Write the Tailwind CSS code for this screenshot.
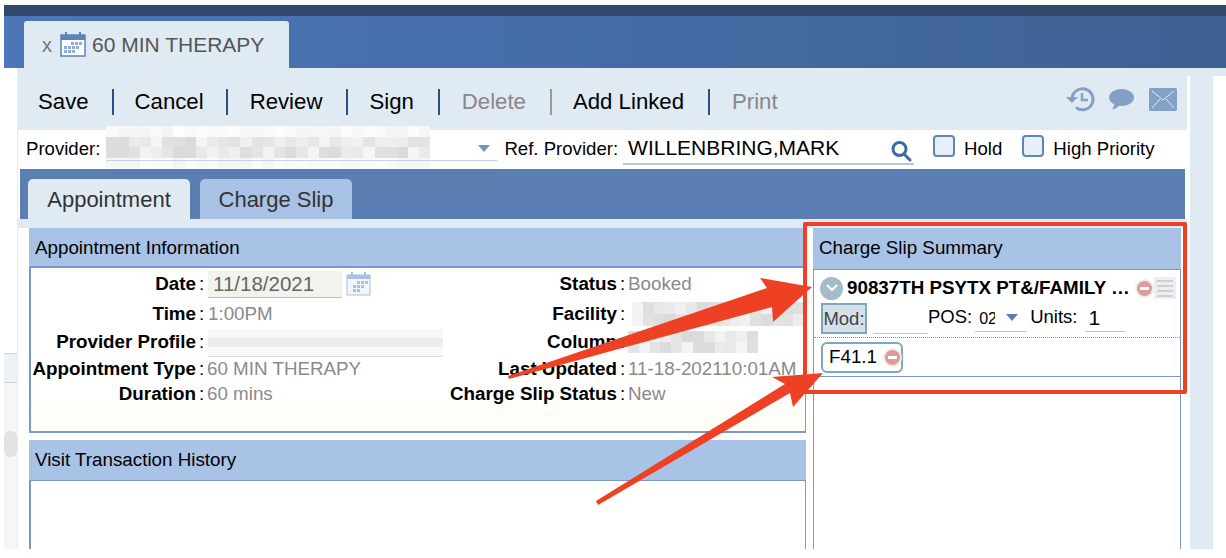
<!DOCTYPE html>
<html lang="en">
<head>
  <meta charset="UTF-8" />
  <title>60 MIN THERAPY</title>
  <script src="https://cdn.jsdelivr.net/npm/@tailwindcss/browser@4"></script>
</head>
<body class="bg-white font-['Liberation_Sans',Arial,sans-serif] text-black overflow-hidden">
<div class="relative w-[1226px] h-[549px] pt-[5px] overflow-hidden">

  <!-- top bar -->
  <div class="ml-[4px] h-[11px] bg-[#34496a]"></div>
  <div class="ml-[4px] h-[52px] pt-[5px] pl-[20px] bg-gradient-to-r from-[#4b76b8] to-[#3e6193]">
    <div class="w-[265px] h-[47px] bg-[#e0eaf2] rounded-t-[3px] flex items-center pl-[18px] text-[#555] text-[21px]">
      <span class="text-[#777] text-[20px] w-[18px]">x</span>
      <svg class="w-[26px] h-[26px] mr-[6px] -mt-[1px]" viewBox="0 0 26 26">
        <rect x="1" y="4" width="24" height="21" fill="#fff" stroke="#5b85b8" stroke-width="1.5"/>
        <rect x="1" y="4" width="24" height="5" fill="#5b85b8"/>
        <rect x="5" y="1" width="2" height="6" fill="#5b85b8"/><rect x="19" y="1" width="2" height="6" fill="#5b85b8"/>
        <g fill="#8fadd0"><rect x="11" y="11" width="3" height="3"/><rect x="15" y="11" width="3" height="3"/><rect x="19" y="11" width="3" height="3"/><rect x="4" y="15" width="3" height="3"/><rect x="8" y="15" width="3" height="3"/><rect x="12" y="15" width="3" height="3"/><rect x="16" y="15" width="3" height="3"/><rect x="4" y="19" width="3" height="3"/><rect x="8" y="19" width="3" height="3"/><rect x="12" y="19" width="3" height="3"/></g>
      </svg>
      <span>60 MIN THERAPY</span>
    </div>
  </div>

  <div class="flex">
    <!-- left edge scroller -->
    <div class="w-[18px] h-[481px] pl-[4px] flex flex-col border-r border-[#e4edf4]">
      <div class="h-[285px]"></div>
      <div class="h-[30px] bg-[#eef2f6] border-y border-[#cfd4d8]"></div>
      <div class="flex-1 bg-[#f6f6f6] pt-[48px]">
        <div class="h-[26px] rounded-[6px] bg-[#e2e2e2]"></div>
      </div>
    </div>

    <!-- main -->
    <div class="w-[1169px]">
      <!-- toolbar -->
      <div class="h-[62px] bg-[#e0eaf2] flex items-center pt-[6px] pl-[20px] pr-[10px] text-[22.200px]">
        <span class="pr-[23px]">Save</span>
        <span class="pl-[21px] pr-[22px] border-l-2 border-[#2a5080] leading-[26px]">Cancel</span>
        <span class="pl-[22px] pr-[24px] border-l-2 border-[#2a5080] leading-[26px]">Review</span>
        <span class="pl-[21px] pr-[24px] border-l-2 border-[#2a5080] leading-[26px]">Sign</span>
        <span class="pl-[22px] pr-[24px] border-l-2 border-[#2a5080] leading-[26px] text-[#888]">Delete</span>
        <span class="pl-[21px] pr-[24px] border-l-2 border-[#999] leading-[26px]">Add Linked</span>
        <span class="pl-[22px] border-l-2 border-[#2a5080] leading-[26px] text-[#888]">Print</span>
        <div class="ml-auto flex items-center -mt-[6px]">
          <svg class="w-[30px] h-[26px]" viewBox="0 0 30 26" fill="none" stroke="#84a0c6" stroke-width="3">
            <path d="M7 13a10.500 10.500 0 1 1 4 8.500"/>
            <path d="M1 11l6 6 6-6z" fill="#84a0c6" stroke="none"/>
            <path d="M17 7v7h6" stroke-width="2.500"/>
          </svg>
          <svg class="w-[27px] h-[23px] ml-[13px]" viewBox="0 0 27 23"><path d="M13.500 1C6.500 1 1 4.800 1 9.500c0 2.900 2 5.400 5.200 6.900-.3 2-1.300 3.800-2.600 5.100 3-.3 5.800-1.800 7.700-3.700.7.100 1.400.200 2.200.200 7 0 12.500-3.800 12.500-8.500S20.500 1 13.500 1z" fill="#84a0c6"/></svg>
          <svg class="w-[28px] h-[23px] ml-[14px]" viewBox="0 0 28 23"><rect width="28" height="23" rx="1.500" fill="#84a0c6"/><path d="M3 3l11 9 11-9M3 20l8-9M25 20l-8-9" fill="none" stroke="#e8eef5" stroke-width="1"/></svg>
        </div>
      </div>

      <!-- provider row -->
      <div class="relative h-[39px] flex items-center text-[18.600px] pl-[8px] pb-[2px]">
        <span>Provider:</span>
        <div class="relative w-[391px] h-[39px] ml-[6px] mr-[7px]">
          <div data-pixels="29,4" class="absolute left-0 -top-[3px] w-[324px] h-[42px]"></div>
          <div class="absolute left-0 right-0 bottom-[7px] h-px bg-[#c4d2e4]"></div>
          <div class="absolute left-[372px] top-[16px] border-x-[6px] border-x-transparent border-t-[7px] border-t-[#6f93c4]"></div>
        </div>
        <span>Ref. Provider:</span>
        <div class="relative w-[291px] h-[33px] ml-[5px] border-b-2 border-[#b6c7de] flex items-center pl-[5px] text-[21px]">
          WILLENBRING,MARK
          <svg class="absolute left-[267px] top-[8px] w-[22px] h-[22px]" viewBox="0 0 22 22" fill="none" stroke="#3f6a9f" stroke-width="3"><circle cx="9.500" cy="9" r="6.500"/><path d="M14 14l6 6" stroke-linecap="round"/></svg>
        </div>
        <span class="w-[22px] h-[22px] ml-[19px] -mt-[6px] rounded-[4px] border-2 border-[#5f86b5] bg-[#e6effa]"></span>
        <span class="ml-[9px]">Hold</span>
        <span class="w-[22px] h-[22px] ml-[20px] -mt-[6px] rounded-[4px] border-2 border-[#5f86b5] bg-[#e6effa]"></span>
        <span class="ml-[9px]">High Priority</span>
      </div>

      <!-- tabs band -->
      <div class="ml-[2px] mr-[2px] h-[50px] bg-[#5b7fb3] flex items-end pl-[8px] text-[22px]">
        <div class="w-[162px] h-[40px] rounded-t-[5px] bg-[#e0eaf2] text-[#333] flex items-center justify-center">Appointment</div>
        <div class="w-[152px] h-[40px] ml-[10px] rounded-t-[5px] bg-[#a8c2e5] text-[#333] flex items-center justify-center">Charge Slip</div>
      </div>
      <div class="h-[9px] bg-[#e0eaf2]"></div>

      <div class="flex pl-[11px] text-[18.800px]">
        <!-- left column -->
        <div class="w-[777px] flex flex-col">
          <div class="h-[38px] bg-[#a9c3e6] flex items-center pl-[6px] pt-[2px]">Appointment Information</div>
          <div class="h-[167px] border-2 border-[#7b98c6] border-r bg-gradient-to-b from-white from-[82%] to-[#fffdf8] to-[82%]">
            <div class="grid grid-cols-[165px_12px_240px_169px_11px_1fr] grid-rows-[33px_26px_30px_25px_24px] items-center whitespace-nowrap">
              <b class="text-right">Date</b><span class="pl-[3px]">:</span>
              <div class="relative">
                <div class="w-[134px] h-[27px] bg-[#f3f3ee] border-b border-[#bbb] pl-[5px] text-[#666] text-[20.500px] leading-[26px]">11/18/2021</div>
                <svg class="absolute left-[138px] top-0 w-[25px] h-[25px]" viewBox="0 0 25 25">
                  <rect x="1" y="4" width="23" height="20" fill="#f2f6fb" stroke="#a9c0de"/><rect x="1" y="4" width="23" height="4" fill="#a9c0de"/>
                  <rect x="5" y="1" width="2" height="5" fill="#a9c0de"/><rect x="18" y="1" width="2" height="5" fill="#a9c0de"/>
                  <g fill="#a9c0de"><rect x="11" y="10" width="3" height="3"/><rect x="15" y="10" width="3" height="3"/><rect x="19" y="10" width="3" height="3"/><rect x="7" y="14" width="3" height="3"/><rect x="11" y="14" width="3" height="3"/><rect x="15" y="14" width="3" height="3"/><rect x="7" y="18" width="3" height="3"/><rect x="11" y="18" width="3" height="3"/></g>
                </svg>
              </div>
              <b class="text-right">Status</b><span class="pl-[3px]">:</span><span class="text-[#8a8a8a]">Booked</span>

              <b class="text-right">Time</b><span class="pl-[3px]">:</span><span class="text-[#8a8a8a]">1:00PM</span>
              <b class="text-right">Facility</b><span class="pl-[3px]">:</span>
              <div data-pixels="16,2" class="w-[172px] h-[24px] ml-[4px]"></div>

              <b class="text-right">Provider Profile</b><span class="pl-[3px]">:</span>
              <div class="w-[235px] h-[28px] border-b border-[#ddd] mt-[2px]" data-pixels="24,3"></div>
              <b class="text-right">Column</b><span class="pl-[3px]">:</span>
              <div data-pixels="12,2" class="w-[130px] h-[22px]"></div>

              <b class="text-right">Appointment Type</b><span class="pl-[3px]">:</span><span class="text-[#8a8a8a] -ml-px">60 MIN THERAPY</span>
              <b class="text-right">Last Updated</b><span class="pl-[3px]">:</span><span class="text-[#8a8a8a]">11-18-202110:01AM</span>

              <b class="text-right">Duration</b><span class="pl-[3px]">:</span><span class="text-[#8a8a8a] -ml-px">60 mins</span>
              <b class="text-right">Charge Slip Status</b><span class="pl-[3px]">:</span><span class="text-[#8a8a8a]">New</span>
            </div>
          </div>
          <div class="h-[41px] mt-[7px] bg-[#a9c3e6] border-b border-[#7b98c6] flex items-center pl-[6px] pt-[1px]">Visit Transaction History</div>
          <div class="flex-1 border-l-2 border-r border-[#7b98c6]"></div>
        </div>

        <!-- right column -->
        <div class="w-[368px] ml-[7px] flex flex-col h-[321px]">
          <div class="h-[41px] bg-[#a9c3e6] flex items-center pl-[6px]">Charge Slip Summary</div>
          <div class="flex-1 border-x border-t border-[#7b98c6]">
            <div class="h-[107px] border-b border-[#7b98c6]">
              <div class="flex items-center h-[33px] pt-[3px] pl-[6px]">
                <span class="w-[23px] h-[23px] rounded-full bg-[#a3bccb] flex items-center justify-center">
                  <svg class="w-[12px] h-[8px]" viewBox="0 0 12 8" fill="none" stroke="#fff" stroke-width="2"><path d="M1 1l5 5 5-5"/></svg>
                </span>
                <b class="ml-[4px] w-[290px] whitespace-nowrap">90837TH PSYTX PT&amp;/FAMILY …</b>
                <span class="w-[15px] h-[15px] rounded-full bg-[#dc9c97] ring-2 ring-[#f0ecec] flex items-center justify-center"><span class="w-[9px] h-[3px] bg-white"></span></span>
                <span class="w-[22px] h-[22px] ml-[2px] bg-[#eeeeee] flex flex-col justify-center gap-[3px] px-[3px]">
                  <span class="h-[2px] bg-[#cfcfcf]"></span><span class="h-[2px] bg-[#cfcfcf]"></span><span class="h-[2px] bg-[#cfcfcf]"></span><span class="h-[2px] bg-[#cfcfcf]"></span>
                </span>
              </div>
              <div class="flex h-[35px] pl-[7px] items-start border-b border-dotted border-[#7b98c6] pb-[2px] text-[18.500px]">
                <span class="w-[46px] h-[31px] bg-[#d5e0e8] border-2 border-[#7da7c0] text-[#444] flex items-center justify-center">Mod:</span>
                <span class="w-[55px] h-[31px] ml-[6px] border-b border-[#b6c7de]"></span>
                <span>POS:</span>
                <div class="relative w-[51px] h-[29px] ml-[3px] border-b border-[#b6c7de]">
                  <span class="absolute left-[4px] top-[6px] w-[16px] h-[20px] leading-[20px] overflow-hidden text-[16px] whitespace-nowrap">02</span>
                  <span class="absolute left-[31px] top-[11px] border-x-[6px] border-x-transparent border-t-[7px] border-t-[#5b7fb3]"></span>
                </div>
                <span class="ml-[4px]">Units:</span>
                <span class="w-[40px] h-[29px] ml-[7px] border-b border-[#b6c7de] pl-[4px] text-[21px] leading-[29px]">1</span>
              </div>
              <div class="pl-[7px] pt-[4px]">
                <div class="w-[82px] h-[31px] rounded-[6px] border-2 border-[#7da7c0] flex items-center pl-[6px]">
                  F41.1
                  <span class="w-[15px] h-[15px] ml-[8px] rounded-full bg-[#dc9c97] ring-2 ring-[#f0ecec] flex items-center justify-center"><span class="w-[9px] h-[3px] bg-white"></span></span>
                </div>
              </div>
            </div>
          </div>
        </div>
      </div>
    </div>

    <!-- right rail -->
    <div class="ml-[3px] w-[23px] h-[481px] bg-[#e0eaf2]"></div>
    <div class="absolute left-[1187px] top-[68px] w-[39px] h-[8px] bg-[#e0eaf2]"></div>
  </div>

  <!-- annotation: red box and arrows -->
  <div class="absolute left-[803px] top-[222px] w-[384px] h-[172px] border-[4px] border-[#ee4023] rounded-[2px]"></div>
  <svg class="absolute left-0 top-0 w-[1226px] h-[549px] pointer-events-none" viewBox="0 0 1226 549">
    <polygon fill="#ee4023" points="508,376 767,288 760,278 812,287 773,322 772,307 509,379"/>
    <polygon fill="#ee4023" points="596,501 785,384 772,377 823,373 793,407 790,393 598,505"/>
  </svg>
</div>

<script>
  // pixelated blocks standing in for the redacted names
  document.querySelectorAll("[data-pixels]").forEach(function (box) {
    const [cols, rows] = box.dataset.pixels.split(",").map(Number);
    box.style.display = "grid";
    box.style.gridTemplateColumns = "repeat(" + cols + ",1fr)";
    box.style.gridTemplateRows = "repeat(" + rows + ",1fr)";
    let seed = cols * 7 + rows;
    for (let i = 0; i < cols * rows; i++) {
      seed = (seed * 31 + 11) % 97;
      const row = Math.floor(i / cols);
      const middle = rows < 3 || (row > 0 && row < rows - 1);
      const shade = middle ? 218 + (seed % 28) : 244 + (seed % 10);
      const cell = document.createElement("div");
      cell.style.background = "rgb(" + shade + "," + shade + "," + shade + ")";
      box.appendChild(cell);
    }
  });
</script>
</body>
</html>
